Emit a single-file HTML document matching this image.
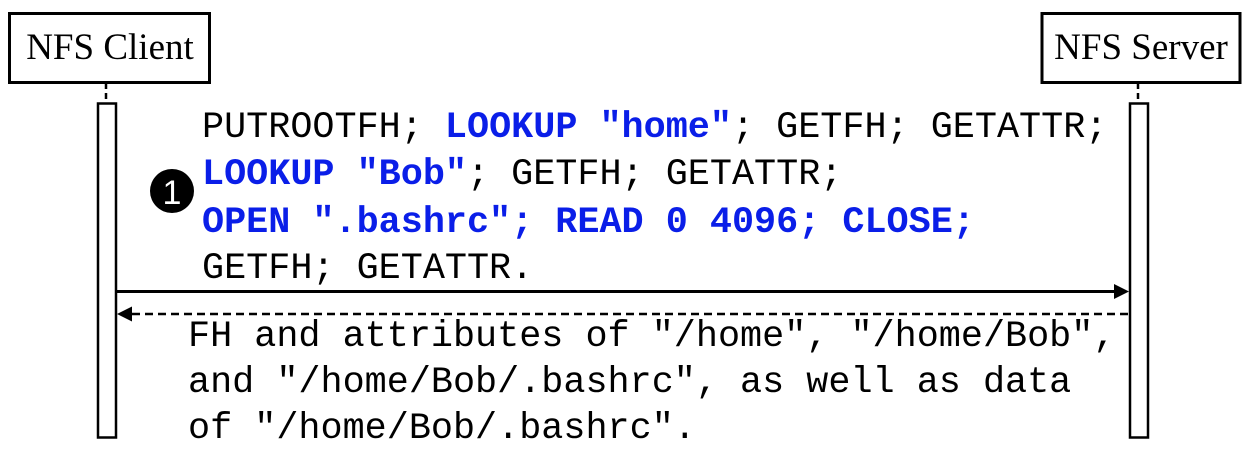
<!DOCTYPE html>
<html><head><meta charset="utf-8"><style>html,body{margin:0;padding:0;background:#fff}svg{display:block}</style></head>
<body>
<svg width="1254" height="450" viewBox="0 0 1254 450" xmlns="http://www.w3.org/2000/svg">
<rect x="9.5" y="13.5" width="200" height="69" fill="#fff" stroke="#000" stroke-width="3"/>
<text x="110" y="59" font-family="Liberation Serif, serif" font-size="37" text-anchor="middle">NFS Client</text>
<rect x="1042" y="13.5" width="198" height="69" fill="#fff" stroke="#000" stroke-width="3"/>
<text x="1141" y="59" font-family="Liberation Serif, serif" font-size="37" text-anchor="middle">NFS Server</text>
<line x1="106" y1="83" x2="106" y2="103" stroke="#000" stroke-width="2.5" stroke-dasharray="6,4"/>
<line x1="1138" y1="83" x2="1138" y2="103" stroke="#000" stroke-width="2.5" stroke-dasharray="6,4"/>
<rect x="98" y="103.5" width="18" height="334" fill="#fff" stroke="#000" stroke-width="2.5"/>
<rect x="1130" y="103.5" width="18" height="334" fill="#fff" stroke="#000" stroke-width="2.5"/>
<line x1="117" y1="291.5" x2="1115" y2="291.5" stroke="#000" stroke-width="3"/>
<polygon points="1129,291.5 1114,284 1114,299" fill="#000"/>
<line x1="132" y1="314" x2="1129" y2="314" stroke="#000" stroke-width="2.5" stroke-dasharray="8,5"/>
<polygon points="117,314 132,306.5 132,321.5" fill="#000"/>
<circle cx="172" cy="191" r="22" fill="#000"/>
<text x="172" y="204" font-family="Liberation Sans, sans-serif" font-size="34" fill="#fff" text-anchor="middle">1</text>
<g font-family="Liberation Mono, monospace" font-size="36.8" xml:space="preserve">
<text x="202" y="137"><tspan>PUTROOTFH; </tspan><tspan fill="#0a1ee8" font-weight="bold">LOOKUP "home"</tspan><tspan>; GETFH; GETATTR;</tspan></text>
<text x="202" y="184"><tspan fill="#0a1ee8" font-weight="bold">LOOKUP "Bob"</tspan><tspan>; GETFH; GETATTR;</tspan></text>
<text x="202" y="232" fill="#0a1ee8" font-weight="bold">OPEN ".bashrc"; READ 0 4096; CLOSE;</text>
<text x="202" y="278">GETFH; GETATTR.</text>
<text x="188" y="346">FH and attributes of "/home", "/home/Bob",</text>
<text x="188" y="392">and "/home/Bob/.bashrc", as well as data</text>
<text x="188" y="438">of "/home/Bob/.bashrc".</text>
</g>
</svg>
</body></html>
